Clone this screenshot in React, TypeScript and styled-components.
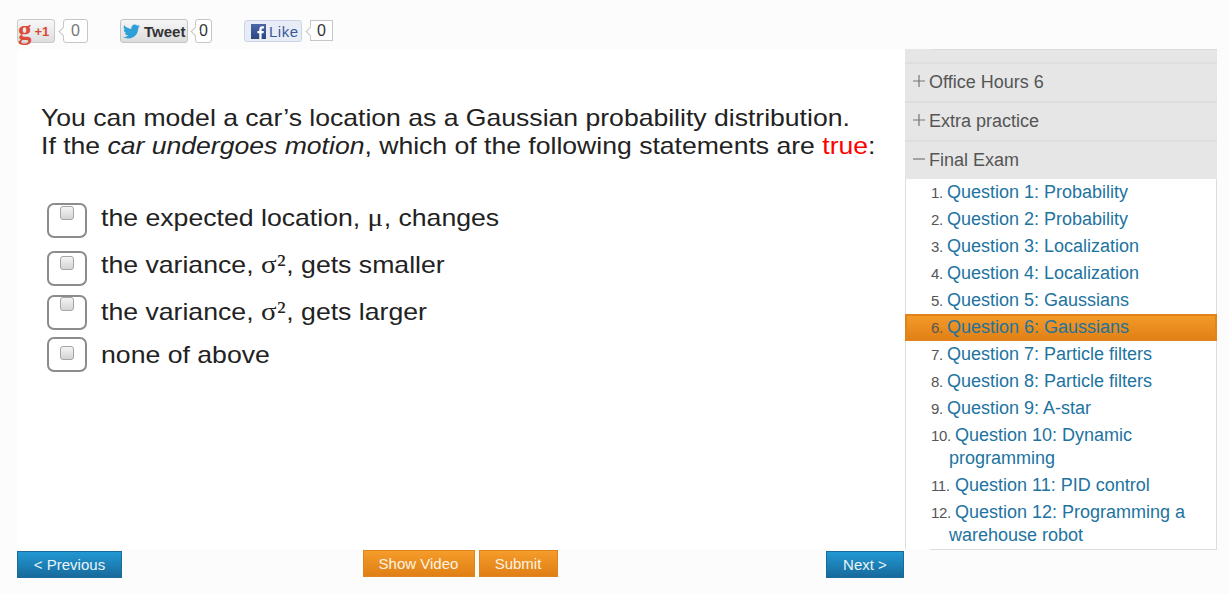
import React from "react";
import styled, { createGlobalStyle } from "styled-components";
import { FaTwitter } from "react-icons/fa";

const GlobalStyle = createGlobalStyle`
  html, body {
    margin: 0;
    padding: 0;
    background: #fcfcfc;
    font-family: "Liberation Sans", Arial, sans-serif;
  }
`;

const questions = [
  "Question 1: Probability",
  "Question 2: Probability",
  "Question 3: Localization",
  "Question 4: Localization",
  "Question 5: Gaussians",
  "Question 6: Gaussians",
  "Question 7: Particle filters",
  "Question 8: Particle filters",
  "Question 9: A-star",
  "Question 10: Dynamic programming",
  "Question 11: PID control",
  "Question 12: Programming a warehouse robot",
];

const options = [
  { label: "the expected location, ", symbol: "μ", rest: ", changes", gap: 0, inner: 1, shift: -3 },
  { label: "the variance, ", symbol: "σ²", rest: ", gets smaller", gap: 13, inner: 3, shift: -4 },
  { label: "the variance, ", symbol: "σ²", rest: ", gets larger", gap: 9, inner: 0, shift: -1 },
  { label: "none of above", symbol: "", rest: "", gap: 7, inner: 7, shift: 0 },
];

const FacebookIcon = () => (
  <svg width="15" height="15" viewBox="0 0 15 15">
    <defs>
      <linearGradient id="fb" x1="0" y1="0" x2="0" y2="1">
        <stop offset="0" stopColor="#4a66a8" />
        <stop offset="1" stopColor="#2b4680" />
      </linearGradient>
    </defs>
    <rect width="15" height="15" fill="url(#fb)" />
    <path d="M10.6 15V9.2h1.9l.3-2.3h-2.2V5.5c0-.7.2-1.1 1.1-1.1h1.2V2.3c-.2 0-.9-.1-1.7-.1-1.7 0-2.9 1-2.9 3v1.7H6.4v2.3h1.9V15z" fill="#fff" />
  </svg>
);

const SectionIcon = ({ open }: { open?: boolean }) => (
  <IconSlot width="12" height="12" viewBox="0 0 12 12">
    <path d={open ? "M0 6h12" : "M0 6h12M6 0v12"} stroke="#777" strokeWidth="1.2" fill="none" />
  </IconSlot>
);

export default function App() {
  return (
    <Page>
      <GlobalStyle />
      <SocialBar>
        <SocialGroup>
          <PlusButton>
            <GLetter>g</GLetter>
            <PlusOne>+1</PlusOne>
          </PlusButton>
          <Counter $width={25} $height={24} $color="#777" $gap={1}>0</Counter>
        </SocialGroup>
        <SocialGroup>
          <TweetButton>
            <FaTwitter size={17} color="#2f9fd8" />
            Tweet
          </TweetButton>
          <Counter $width={17} $height={24} $color="#333">0</Counter>
        </SocialGroup>
        <SocialGroup>
          <LikeButton>
            <FacebookIcon />
            Like
          </LikeButton>
          <Counter $width={23} $height={21} $color="#333" $gap={1} $square>0</Counter>
        </SocialGroup>
      </SocialBar>
      <Main>
        <QuizPanel>
          <Prompt>
            You can model a car’s location as a Gaussian probability distribution.
            <br />
            If the <em>car undergoes motion</em>, which of the following statements are <TrueWord>true</TrueWord>:
          </Prompt>
          <OptionList>
            {options.map((o, i) => (
              <OptionRow key={i} $gap={o.gap}>
                <OptionBox $inner={o.inner}>
                  <OptionCheck type="checkbox" aria-label={o.label + o.rest} />
                </OptionBox>
                <OptionText $shift={o.shift}>
                  {o.label}
                  {o.symbol && <Symbol>{o.symbol}</Symbol>}
                  {o.rest}
                </OptionText>
              </OptionRow>
            ))}
          </OptionList>
        </QuizPanel>
        <Sidebar>
          <TopStub />
          <SectionHeader>
            <SectionIcon />
            Office Hours 6
          </SectionHeader>
          <SectionHeader>
            <SectionIcon />
            Extra practice
          </SectionHeader>
          <SectionHeader>
            <SectionIcon open />
            Final Exam
          </SectionHeader>
          <QuestionList>
            {questions.map((q, i) => (
              <QuestionItem key={q} $active={i === 5} $wide={i >= 9}>
                <QuestionNumber $wide={i >= 9}>{i + 1}.</QuestionNumber>
                <QuestionLink href="#">{q}</QuestionLink>
              </QuestionItem>
            ))}
          </QuestionList>
        </Sidebar>
      </Main>
      <Footer>
        <BlueButton $width={105}>&lt; Previous</BlueButton>
        <CenterButtons>
          <OrangeButton $width={112}>Show Video</OrangeButton>
          <OrangeButton $width={79}>Submit</OrangeButton>
        </CenterButtons>
        <BlueButton $width={78}>Next &gt;</BlueButton>
      </Footer>
    </Page>
  );
}

const Page = styled.div`
  width: 1229px;
  height: 594px;
  padding-left: 17px;
  box-sizing: border-box;
  overflow: hidden;
  background: #fcfcfc;
`;

const SocialBar = styled.div`
  height: 49px;
  padding-top: 19px;
  box-sizing: border-box;
  display: flex;
  align-items: flex-start;
  gap: 32px;
`;

const SocialGroup = styled.div`
  display: flex;
  align-items: flex-start;
  gap: 7px;
`;

const socialButton = `
  height: 24px;
  box-sizing: border-box;
  display: flex;
  align-items: center;
  border-radius: 3px;
  font-size: 15px;
  font-weight: 700;
`;

const PlusButton = styled.div`
  ${socialButton}
  width: 38px;
  border: 1px solid #c9c9c9;
  background: linear-gradient(#f8f8f8, #dedede);
`;

const GLetter = styled.span`
  font-family: "Liberation Serif", serif;
  font-size: 27px;
  font-weight: 700;
  color: #dd4b39;
  line-height: 20px;
  margin-top: -3px;
`;

const PlusOne = styled.span`
  font-size: 13px;
  color: #d9472f;
  margin-left: 3px;
`;

const TweetButton = styled.div`
  ${socialButton}
  width: 68px;
  padding-left: 2px;
  gap: 4px;
  color: #333;
  border: 1px solid #c4c4c4;
  background: linear-gradient(#f6f6f6, #dcdcdc);
`;

const LikeButton = styled.div`
  ${socialButton}
  height: 22px;
  margin-top: 1px;
  width: 58px;
  padding-left: 6px;
  gap: 3px;
  color: #3b5998;
  font-weight: 400;
  letter-spacing: 0.5px;
  border: 1px solid #cad4e7;
  background: #e8ecf6;
`;

const Counter = styled.div<{ $width: number; $height: number; $color: string; $square?: boolean; $gap?: number }>`
  position: relative;
  width: ${(p) => p.$width}px;
  height: ${(p) => p.$height}px;
  margin-top: ${(p) => (p.$square ? 1 : 0)}px;
  margin-left: ${(p) => p.$gap || 0}px;
  box-sizing: border-box;
  border: 1px solid #c6c6c6;
  border-radius: ${(p) => (p.$square ? 0 : 3)}px;
  background: #fff;
  color: ${(p) => p.$color};
  font-size: 16px;
  line-height: ${(p) => p.$height - 2}px;
  text-align: center;

  &::before {
    content: "";
    position: absolute;
    left: -4px;
    top: 50%;
    width: 6px;
    height: 6px;
    margin-top: -3px;
    background: #fff;
    border-left: 1px solid #c6c6c6;
    border-bottom: 1px solid #c6c6c6;
    transform: rotate(45deg);
  }
`;

const Main = styled.div`
  display: flex;
  height: 500px;
`;

const QuizPanel = styled.div`
  width: 888px;
  padding: 55px 0 0 24px;
  box-sizing: border-box;
  background: #fff;
`;

const Prompt = styled.p`
  margin: 0;
  font-size: 24px;
  line-height: 28px;
  color: #222;
  white-space: nowrap;
  transform: scaleX(1.107);
  transform-origin: left top;
`;

const TrueWord = styled.span`
  color: #f00;
`;

const OptionList = styled.div`
  margin: 43px 0 0 6px;
  display: flex;
  flex-direction: column;
`;

const OptionRow = styled.div<{ $gap: number }>`
  display: flex;
  align-items: center;
  gap: 14px;
  margin-top: ${(p) => p.$gap}px;
`;

const OptionBox = styled.div<{ $inner: number }>`
  width: 40px;
  height: 35px;
  box-sizing: border-box;
  border: 2px solid #8c8c8c;
  border-radius: 7px;
  padding-top: ${(p) => p.$inner}px;
  display: flex;
  justify-content: center;
  align-items: flex-start;
  background: #fff;
`;

const OptionCheck = styled.input`
  appearance: none;
  width: 14px;
  height: 14px;
  margin: 0;
  box-sizing: border-box;
  border: 1px solid #a5a5a5;
  border-radius: 3px;
  background: linear-gradient(#f4f4f4, #d4d4d4);
`;

const OptionText = styled.span<{ $shift: number }>`
  font-size: 24px;
  line-height: 28px;
  color: #222;
  white-space: nowrap;
  transform: translateY(${(p) => p.$shift}px) scaleX(1.11);
  transform-origin: left center;
`;

const Symbol = styled.span`
  font-family: "Liberation Serif", serif;
  font-size: 26px;
  letter-spacing: 0.5px;
`;

const Sidebar = styled.div`
  width: 312px;
  display: flex;
  flex-direction: column;
  background: #dedede;
`;

const TopStub = styled.div`
  position: relative;
  height: 13px;
  background: #e6e6e6;
  margin-bottom: 2px;

  &::before {
    content: "";
    position: absolute;
    top: 0;
    left: 25px;
    right: 0;
    height: 1px;
    background: #dcdcdc;
  }
`;

const SectionHeader = styled.div`
  height: 37px;
  flex: none;
  display: flex;
  align-items: center;
  gap: 4px;
  padding-left: 8px;
  background: #e6e6e6;
  color: #555;
  font-size: 18px;

  & + & {
    margin-top: 2px;
  }
`;

const IconSlot = styled.svg`
  margin-top: -3px;
`;

const QuestionList = styled.ol`
  position: relative;
  flex: 1;
  margin: 0;
  padding: 0;
  list-style: none;
  background: #fff;
  border-left: 1px solid #ddd;
  border-right: 1px solid #ddd;

  &::after {
    content: "";
    position: absolute;
    left: 24px;
    right: -1px;
    bottom: -1px;
    height: 1px;
    background: #ddd;
  }
`;

const QuestionItem = styled.li<{ $active: boolean; $wide: boolean }>`
  padding: 2px 10px 2px ${(p) => (p.$wide ? 43 : 41) + (p.$active ? 1 : 0)}px;
  margin: 0 ${(p) => (p.$active ? -1 : 0)}px;
  line-height: 23px;
  font-size: 18px;
  background: ${(p) => (p.$active ? "linear-gradient(#f59c2a, #df7f14)" : "transparent")};
  box-shadow: ${(p) => (p.$active ? "inset 0 0 0 2px #e2821a" : "none")};
`;

const QuestionNumber = styled.span<{ $wide: boolean }>`
  display: inline-block;
  width: ${(p) => (p.$wide ? 24 : 16)}px;
  margin-left: ${(p) => (p.$wide ? -18 : -16)}px;
  font-size: 15px;
  line-height: 1;
  letter-spacing: -0.4px;
  color: #555;
`;

const QuestionLink = styled.a`
  color: #21739f;
  text-decoration: none;
`;

const Footer = styled.div`
  width: 887px;
  display: flex;
  justify-content: space-between;
  align-items: flex-start;
  padding-top: 1px;
`;

const CenterButtons = styled.div`
  display: flex;
  gap: 4px;
  margin-right: 28px;
`;

const BlueButton = styled.button<{ $width: number }>`
  width: ${(p) => p.$width}px;
  height: 27px;
  margin-top: 1px;
  padding: 0;
  font-family: inherit;
  font-size: 15px;
  color: #eaf5fb;
  border: 1px solid #1a6a9a;
  background: linear-gradient(#2298d3, #176a9b);
`;

const OrangeButton = styled.button<{ $width: number }>`
  width: ${(p) => p.$width}px;
  height: 27px;
  padding: 0;
  font-family: inherit;
  font-size: 15px;
  color: #fdf3e2;
  border: 1px solid #e0841c;
  background: linear-gradient(#f59c2a, #e07f15);
`;
